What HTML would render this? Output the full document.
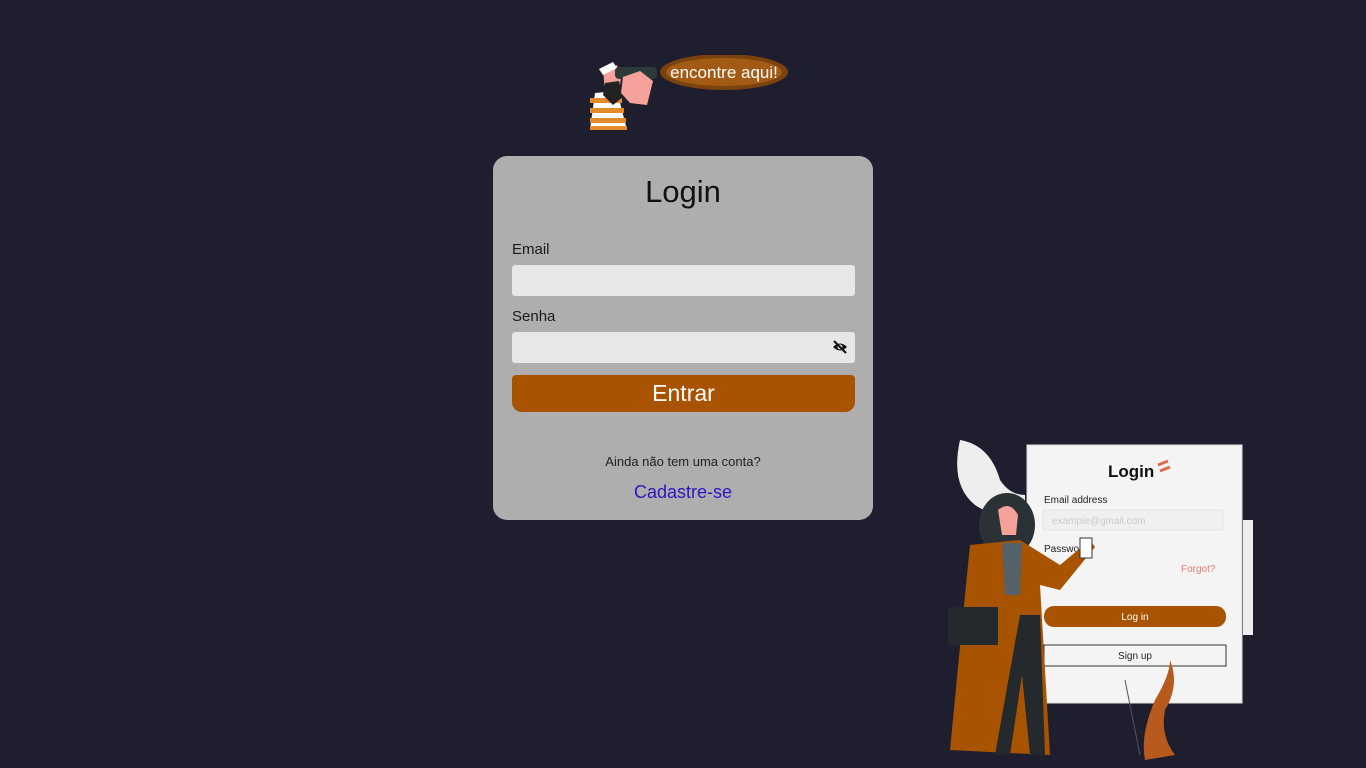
<!DOCTYPE html>
<html><head><meta charset="utf-8"><style>
*{margin:0;padding:0;box-sizing:border-box}
body{width:1366px;height:768px;background:#1f1e2e;font-family:"Liberation Sans",sans-serif;position:relative;overflow:hidden}
.card{position:absolute;left:493px;top:156px;width:380px;height:364px;background:#afadad;border-radius:14px}
.t{position:absolute;left:0;width:100%;text-align:center}
.lbl{position:absolute;left:19px;font-size:15px;color:#1a1a1a}
.inp{position:absolute;left:19px;width:343px;height:31px;background:#e8e6e7;border-radius:3px}
.btn{position:absolute;left:19px;top:219px;width:343px;height:37px;background:#a85300;border-radius:4px 4px 10px 10px;color:#fff;font-size:23px;text-align:center;line-height:36px}
</style></head><body>
<svg style="position:absolute;left:585px;top:55px" width="210" height="80">
<ellipse cx="139" cy="17" rx="64" ry="18" fill="#7a430e"/>
<ellipse cx="139" cy="17" rx="58" ry="14" fill="#a35a14"/>
<text x="139" y="23" text-anchor="middle" font-family="Liberation Sans" font-size="17" fill="#fff">encontre aqui!</text>
<path d="M5 75 L10 38 L32 36 L42 75 Z" fill="#fff"/>
<g fill="#e38a2a"><rect x="5" y="43" width="32" height="5"/><rect x="5" y="53" width="34" height="5"/><rect x="5" y="63" width="36" height="5"/><rect x="5" y="71" width="37" height="4"/></g>
<path d="M18 14 L32 10 L36 22 L34 40 L20 38 Z" fill="#f4a29a"/>
<path d="M20 28 L34 26 L38 42 L28 50 L18 40 Z" fill="#222"/>
<path d="M14 14 L28 7 L32 13 L18 20 Z" fill="#fff"/>
<rect x="30" y="12" width="42" height="12" rx="4" fill="#2c3a3a"/>
<path d="M38 22 L55 16 L68 26 L62 50 L45 48 L36 38 Z" fill="#f4a29a"/>
</svg>
<div class="card">
<div class="t" style="top:18px;font-size:31px;color:#111">Login</div>
<div class="lbl" style="top:85px">Email</div>
<div class="inp" style="top:109px"></div>
<div class="lbl" style="top:152px">Senha</div>
<div class="inp" style="top:176px"><svg style="position:absolute;right:7px;top:8px" width="16" height="14" viewBox="0 0 16 14"><path d="M1 7 Q8 0 15 7 Q8 14 1 7Z" fill="#111"/><circle cx="8" cy="7" r="2.5" fill="#e8e6e7"/><path d="M2 1 L14 13" stroke="#111" stroke-width="2"/></svg></div>
<div class="btn">Entrar</div>
<div class="t" style="top:298px;font-size:13px;color:#222">Ainda não tem uma conta?</div>
<div class="t" style="top:326px;font-size:18px;color:#2a17c4">Cadastre-se</div>
</div>
<svg style="position:absolute;left:930px;top:435px" width="330" height="333">
<path d="M30 5 Q60 10 70 45 Q80 60 95 60 L95 90 Q60 80 45 70 Q20 50 30 5Z" fill="#eeeeee"/>
<rect x="97" y="10" width="215" height="258" fill="#f4f4f4" stroke="#ddd"/>
<rect x="313" y="85" width="10" height="115" fill="#eee"/>
<text x="178" y="42" font-family="Liberation Sans" font-size="17" font-weight="bold" fill="#111">Login</text>
<path d="M228 30 L238 26 M230 36 L240 32" stroke="#e06a50" stroke-width="3"/>
<text x="114" y="68" font-family="Liberation Sans" font-size="10" fill="#222">Email address</text>
<rect x="113" y="75" width="180" height="20" fill="#f0f0f0" stroke="#e6e6e6"/>
<text x="122" y="89" font-family="Liberation Sans" font-size="10" fill="#ccc">example@gmail.com</text>
<text x="114" y="117" font-family="Liberation Sans" font-size="10" fill="#222">Password</text>
<text x="251" y="137" font-family="Liberation Sans" font-size="10" fill="#e48070">Forgot?</text>
<rect x="114" y="171" width="182" height="21" rx="10" fill="#a85300"/>
<text x="205" y="185" text-anchor="middle" font-family="Liberation Sans" font-size="10" fill="#fff">Log in</text>
<rect x="114" y="210" width="182" height="21" fill="#f4f4f4" stroke="#333"/>
<text x="205" y="224" text-anchor="middle" font-family="Liberation Sans" font-size="10" fill="#222">Sign up</text>
<path d="M225 265 Q240 240 240 225 Q250 250 235 275 Q230 300 245 320 L215 325 Q210 300 225 265Z" fill="#b85a1e"/>
<path d="M195 245 L210 320" stroke="#555" fill="none"/>
<ellipse cx="77" cy="90" rx="28" ry="32" fill="#2b3235"/>
<path d="M68 75 Q80 65 88 80 L86 100 L72 100Z" fill="#f4a29a"/>
<path d="M40 110 L90 105 L130 130 L160 105 L165 112 L130 155 L110 150 L120 320 L20 315 L35 160Z" fill="#a85300"/>
<path d="M72 108 L92 108 L90 160 L75 160Z" fill="#55626a"/>
<path d="M90 180 L110 180 L115 320 L100 320 L92 240 L80 320 L65 320 Z" fill="#23292d"/>
<rect x="18" y="172" width="50" height="38" fill="#23292d"/>
<rect x="150" y="103" width="12" height="20" fill="#fff" stroke="#333"/>
</svg>
</body></html>
